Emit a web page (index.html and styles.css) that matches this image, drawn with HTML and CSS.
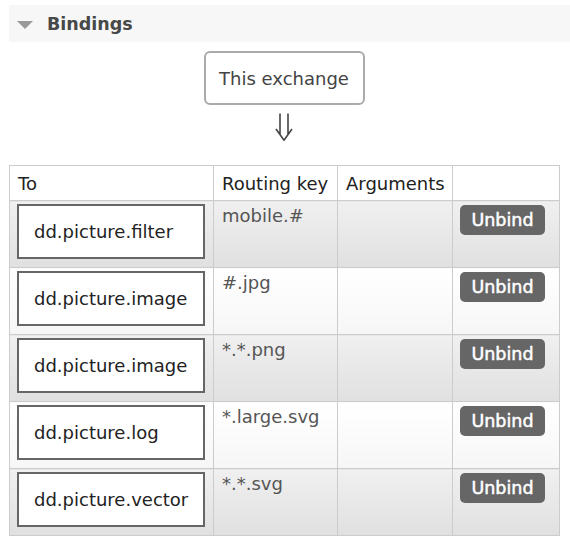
FILE: index.html
```html
<!DOCTYPE html>
<html>
<head>
<meta charset="utf-8">
<link rel="stylesheet" href="styles.css">
</head>
<body>
<div class="section-header">
  <span class="tri"></span>
  <h2 class="section-title">Bindings</h2>
</div>
<div class="content">
  <div class="diagram">
    <div class="exchange-box">This exchange</div>
    <svg class="arrow" width="20" height="28" viewBox="0 0 20 28" aria-label="⇓">
      <path d="M5 0.5V21.5M13 0.5V21.5M1 16L9 27.2L17 16" fill="none" stroke="#444" stroke-width="1.6" stroke-linejoin="miter"/>
    </svg>
  </div>
  <table class="bindings">
    <colgroup>
      <col class="c-to"><col class="c-key"><col class="c-args"><col class="c-act">
    </colgroup>
    <thead>
      <tr><th>To</th><th>Routing key</th><th>Arguments</th><th></th></tr>
    </thead>
    <tbody>
      <tr class="alt1">
        <td><div class="queue">dd.picture.filter</div></td>
        <td class="key">mobile.#</td><td></td>
        <td><span class="btn">Unbind</span></td>
      </tr>
      <tr class="alt2">
        <td><div class="queue">dd.picture.image</div></td>
        <td class="key">#.jpg</td><td></td>
        <td><span class="btn">Unbind</span></td>
      </tr>
      <tr class="alt1">
        <td><div class="queue">dd.picture.image</div></td>
        <td class="key">*.*.png</td><td></td>
        <td><span class="btn">Unbind</span></td>
      </tr>
      <tr class="alt2">
        <td><div class="queue">dd.picture.log</div></td>
        <td class="key">*.large.svg</td><td></td>
        <td><span class="btn">Unbind</span></td>
      </tr>
      <tr class="alt1">
        <td><div class="queue">dd.picture.vector</div></td>
        <td class="key">*.*.svg</td><td></td>
        <td><span class="btn">Unbind</span></td>
      </tr>
    </tbody>
  </table>
</div>
</body>
</html>
```
FILE: styles.css
```css
html, body {
  margin: 0;
  padding: 0;
  background: #fff;
}
body {
  font-family: "DejaVu Sans", Verdana, sans-serif;
  color: #484848;
  font-size: 18px;
}
.section-header {
  margin: 5px 0 0 9px;
  height: 37px;
  background: #f7f7f7;
  display: flex;
  align-items: center;
  padding-left: 8px;
}
.tri {
  width: 0;
  height: 0;
  border-left: 8px solid transparent;
  border-right: 8px solid transparent;
  border-top: 8px solid #999;
  margin-right: 14px;
  margin-top: 3px;
}
.section-title {
  margin: 0;
  font-size: 17.5px;
  font-weight: bold;
  color: #484848;
}
.content {
  width: 550px;
  margin-left: 9px;
}
.diagram {
  display: flex;
  flex-direction: column;
  align-items: center;
  padding-top: 9px;
}
.exchange-box {
  width: 157px;
  height: 50px;
  border: 2px solid #aaa;
  border-radius: 6px;
  display: flex;
  align-items: center;
  justify-content: center;
  font-size: 18px;
  color: #444;
  background: #fff;
}
.arrow {
  display: block;
  margin-top: 8px;
  margin-bottom: 24px;
  margin-left: 2px;
}
table.bindings {
  width: 550px;
  border-collapse: collapse;
  table-layout: fixed;
}
col.c-to { width: 204px; }
col.c-key { width: 124px; }
col.c-args { width: 115px; }
col.c-act { width: 107px; }
.bindings th, .bindings td {
  border: 1px solid #ccc;
  text-align: left;
  vertical-align: top;
  color: #484848;
  font-size: 18px;
}
.bindings thead tr {
  height: 35px;
}
.bindings th {
  font-weight: normal;
  padding: 7px 8px 0;
  background: #fff;
  color: #222;
}
.bindings tbody tr {
  height: 67px;
}
.bindings td {
  padding: 3px 7px 0;
}
tr.alt1 td {
  background: linear-gradient(to bottom, #f0f0f0, #e0e0e0);
}
tr.alt2 td {
  background: linear-gradient(to bottom, #ffffff, #f6f6f6);
}
.bindings td.key {
  color: #555;
  padding: 4px 8px 0;
}
.queue {
  width: 169px;
  height: 51px;
  border: 2px solid #666;
  background: #fff;
  display: flex;
  align-items: center;
  padding-left: 15px;
  font-size: 18px;
  color: #222;
}
.btn {
  display: inline-block;
  margin-top: 1px;
  background: #666;
  color: #fff;
  font-weight: normal;
  font-size: 17.5px;
  -webkit-text-stroke: 0.5px #fff;
  border-radius: 5px;
  width: 85px;
  height: 30px;
  line-height: 30px;
  text-align: center;
}
```
